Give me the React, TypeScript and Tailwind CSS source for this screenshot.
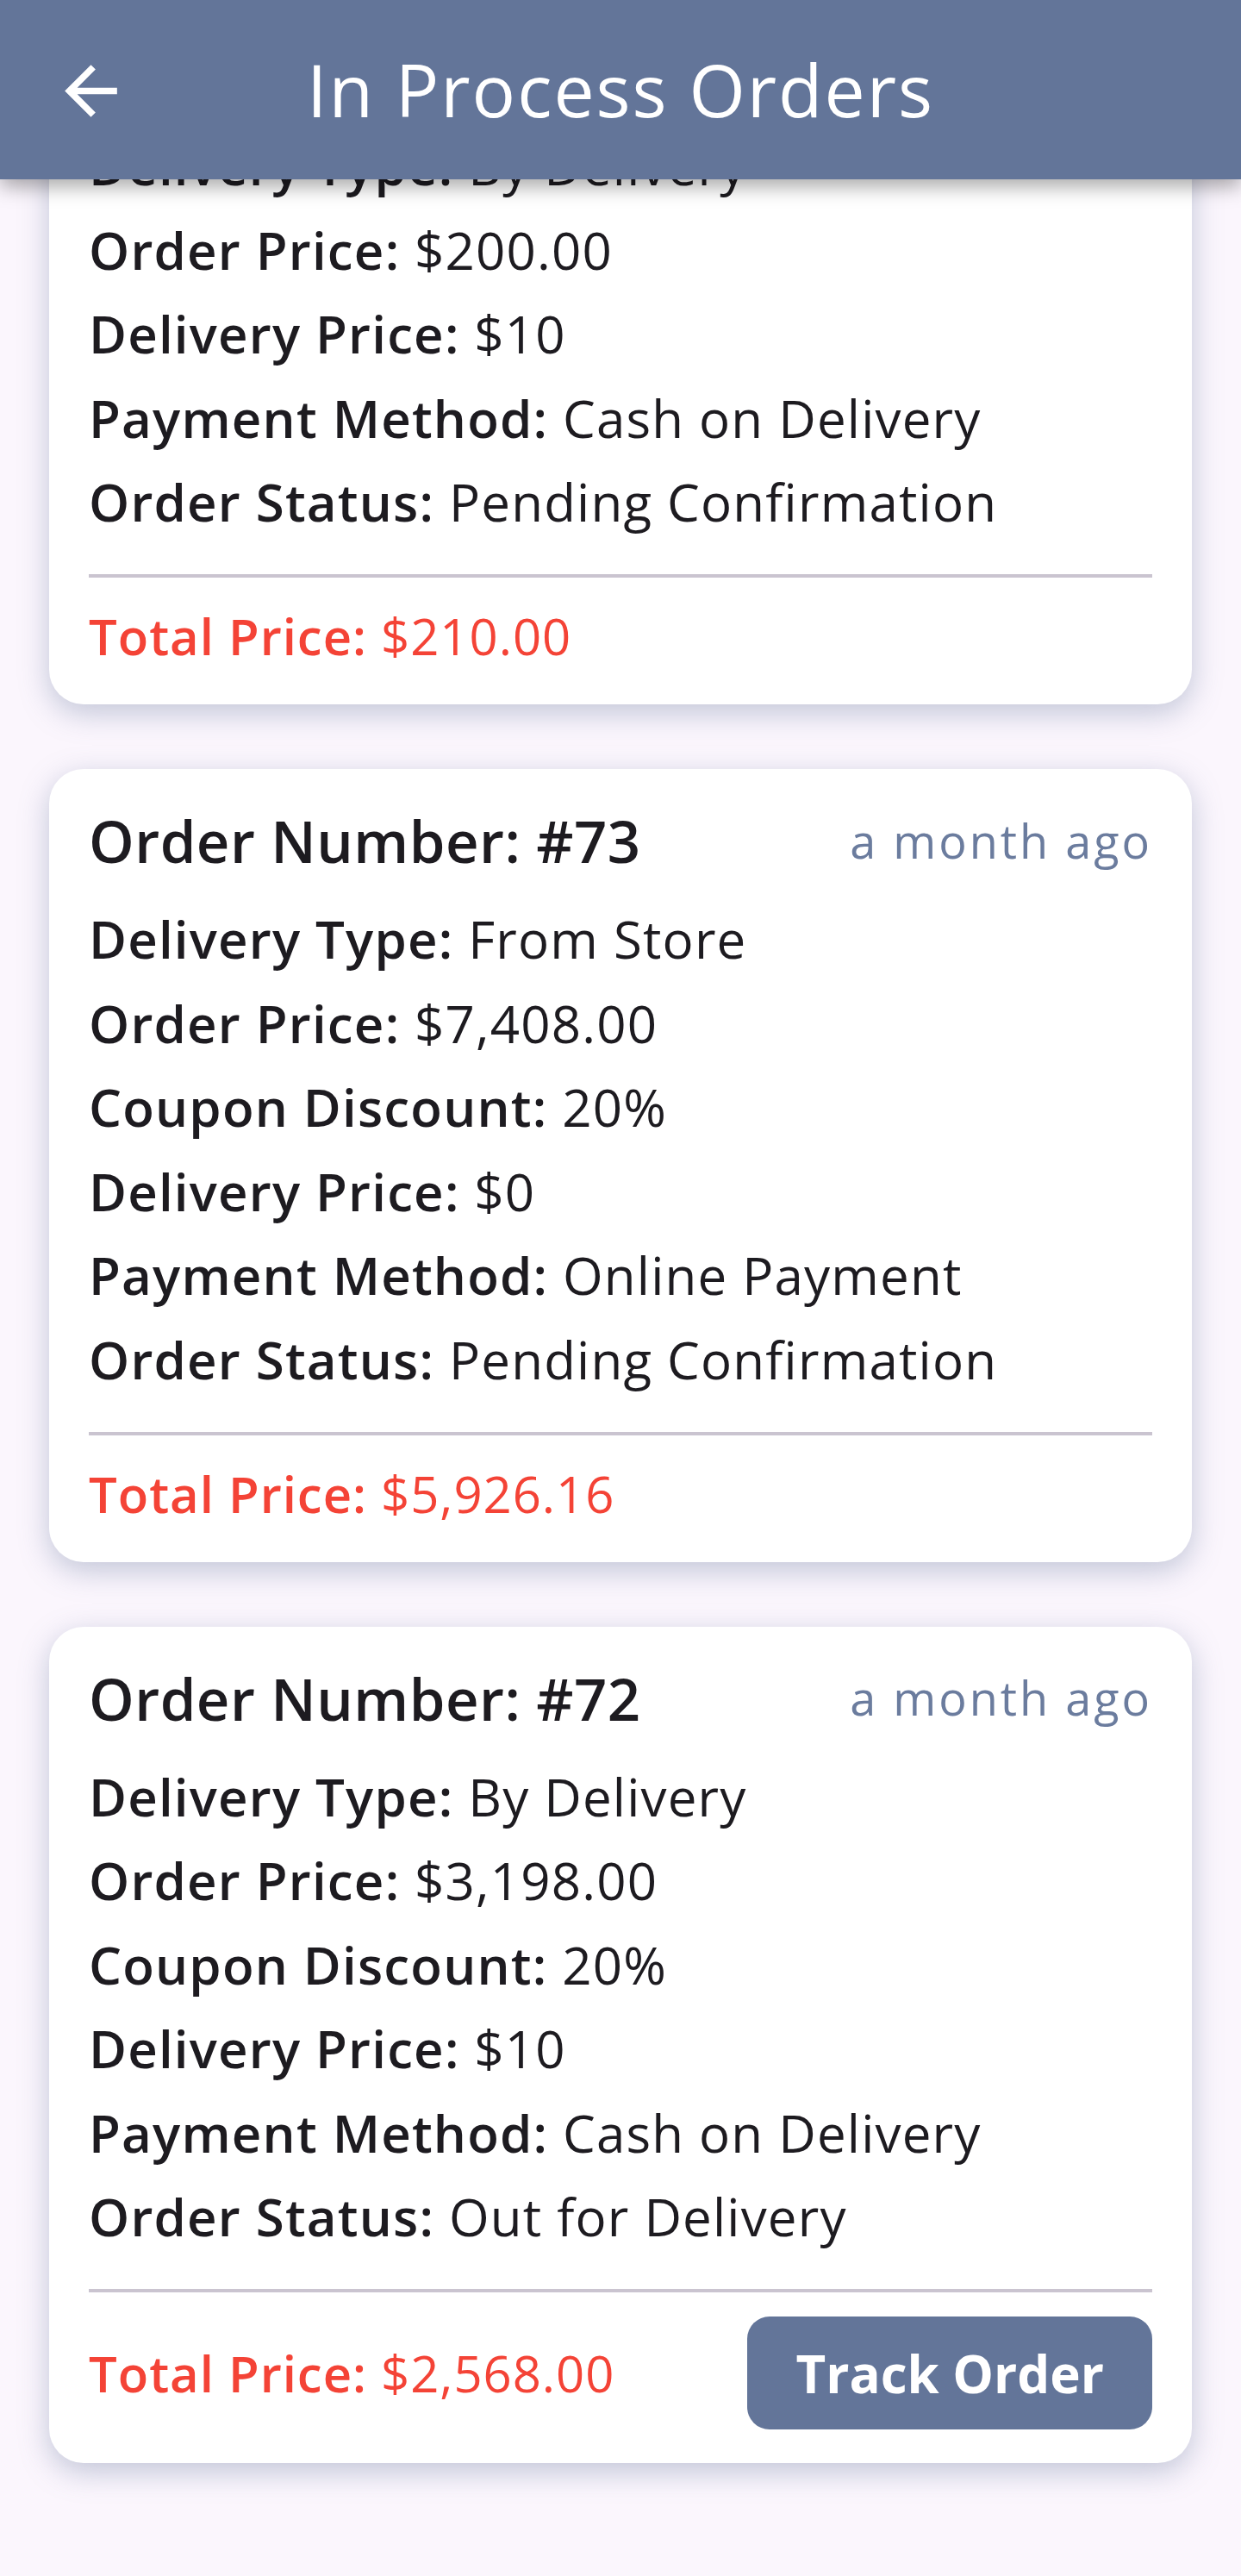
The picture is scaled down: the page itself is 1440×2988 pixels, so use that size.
import { ReactNode } from "react";

type Order = {
  number: number;
  when: string;
  deliveryType: string;
  orderPrice: string;
  coupon?: string;
  deliveryPrice: string;
  payment: string;
  status: string;
  total: string;
  trackable?: boolean;
};

const ORDERS: Order[] = [
  {
    number: 74,
    when: "a month ago",
    deliveryType: "By Delivery",
    orderPrice: "$200.00",
    deliveryPrice: "$10",
    payment: "Cash on Delivery",
    status: "Pending Confirmation",
    total: "$210.00",
  },
  {
    number: 73,
    when: "a month ago",
    deliveryType: "From Store",
    orderPrice: "$7,408.00",
    coupon: "20%",
    deliveryPrice: "$0",
    payment: "Online Payment",
    status: "Pending Confirmation",
    total: "$5,926.16",
  },
  {
    number: 72,
    when: "a month ago",
    deliveryType: "By Delivery",
    orderPrice: "$3,198.00",
    coupon: "20%",
    deliveryPrice: "$10",
    payment: "Cash on Delivery",
    status: "Out for Delivery",
    total: "$2,568.00",
    trackable: true,
  },
];

function Row({ label, children }: { label: string; children: ReactNode }) {
  return (
    <div className="text-[60px] leading-[73px] tracking-[1.2px] text-[#1d1b20] whitespace-nowrap">
      <span className="font-semibold">{label}:</span> {children}
    </div>
  );
}

function OrderCard({ o }: { o: Order }) {
  return (
    <article className="rounded-[40px] bg-white px-[46px] pt-[42px] pb-[39px] shadow-[0_10px_34px_rgba(99,117,154,0.38)]">
      <div className="flex items-center justify-between">
        <h3 className="text-[67px] leading-[82px] tracking-[0.5px] font-semibold text-[#1d1b20]">Order Number: #{o.number}</h3>
        <span className="text-[54px] tracking-[3px] text-[#6b7c9e]">{o.when}</span>
      </div>
      <div className="mt-[37px] flex flex-col gap-[24.5px]">
        <Row label="Delivery Type">{o.deliveryType}</Row>
        <Row label="Order Price">{o.orderPrice}</Row>
        {o.coupon && <Row label="Coupon Discount">{o.coupon}</Row>}
        <Row label="Delivery Price">{o.deliveryPrice}</Row>
        <Row label="Payment Method">{o.payment}</Row>
        <Row label="Order Status">{o.status}</Row>
      </div>
      <div className="mt-[47px] h-[4px] bg-[#cac4d0]" />
      <div className="mt-[28px] flex items-center justify-between">
        <div className="text-[58px] leading-[80px] tracking-[1px] text-[#f44336]">
          <span className="font-semibold">Total Price:</span> {o.total}
        </div>
        {o.trackable && (
          <button className="h-[131px] rounded-[26px] bg-[#637599] px-[56px] text-[60px] font-bold text-white">
            Track Order
          </button>
        )}
      </div>
    </article>
  );
}

export default function App() {
  return (
    <div className="flex h-[2988px] w-[1440px] flex-col overflow-hidden bg-[#fbf6fd] font-['Open_Sans',sans-serif]">
      <header className="relative z-10 flex h-[208px] shrink-0 items-center justify-center bg-[#637599] shadow-[0_8px_22px_rgba(0,0,0,0.35)]">
        <svg viewBox="0 0 24 24" className="absolute left-[60px] top-[60px] h-[91px] w-[91px] fill-white">
          <path d="M20 11H7.83l5.59-5.59L12 4l-8 8 8 8 1.41-1.41L7.83 13H20v-2z" />
        </svg>
        <h1 className="text-[84px] tracking-[2px] font-medium text-white">In Process Orders</h1>
      </header>
      <main className="flex-1 overflow-hidden">
        <div className="-mt-[213px] flex flex-col gap-[75px] px-[57px]">
          {ORDERS.map((o) => (
            <OrderCard key={o.number} o={o} />
          ))}
        </div>
      </main>
    </div>
  );
}
